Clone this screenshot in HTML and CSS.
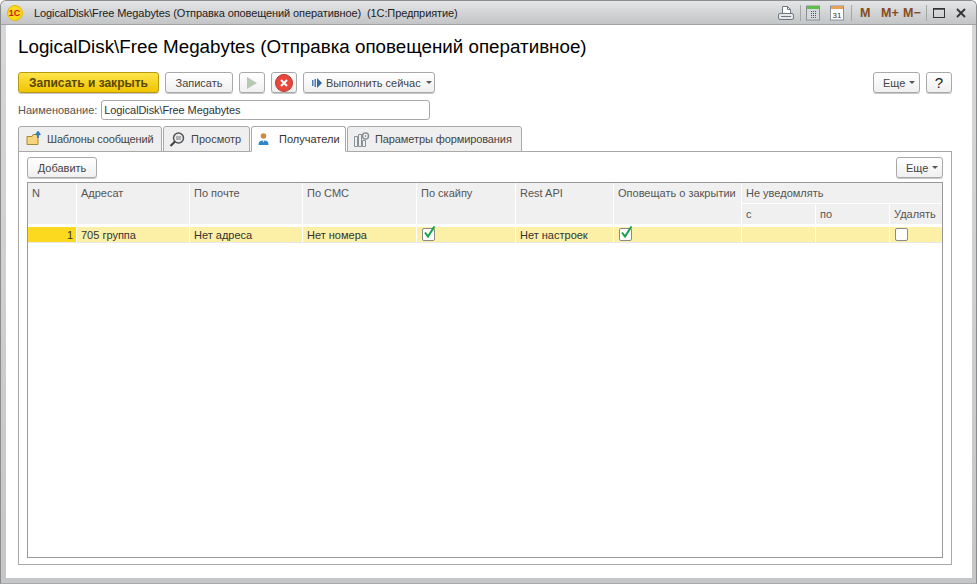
FILE: index.html
```html
<!DOCTYPE html>
<html lang="ru">
<head>
<meta charset="utf-8">
<title>LogicalDisk\Free Megabytes</title>
<link rel="stylesheet" href="styles.css">
</head>
<body>
<div class="window">
  <header class="titlebar">
    <svg class="logo" width="16" height="16" viewBox="0 0 16 16"><circle cx="8" cy="8" r="7.500" fill="#fbd91e" stroke="#e6b800"/><text x="1.800" y="11" class="logo-text">1С</text></svg>
    <span class="wintitle">LogicalDisk\Free Megabytes (Отправка оповещений оперативное)  (1С:Предприятие)</span>
    <div class="winicons">
      <svg class="i-print" width="16" height="16" viewBox="0 0 16 16"><path d="M4.500 1.500h5l3 3v4h-8z" fill="#fff" stroke="#6f7780"/><path d="M9.500 1.500v3h3" fill="none" stroke="#6f7780"/><rect x=".5" y="8.500" width="15" height="6" rx="1.500" fill="#e6e8ea" stroke="#6f7780"/><path d="M3 11.500h10" stroke="#6f7780"/></svg>
      <i class="sep s1"></i>
      <svg class="i-calc" width="14" height="16" viewBox="0 0 14 16"><rect x=".5" y="1" width="13" height="14" fill="#d5d9dc" stroke="#8b9196"/><rect x="1" y="1" width="12" height="3" fill="#5cc04a"/><path d="M5 6h1v1H5zM7 6h1v1H7zM9 6h1v1H9zM5 8h1v1H5zM7 8h1v1H7zM9 8h1v1H9zM5 10h1v1H5zM7 10h1v1H7zM9 10h1v1H9zM5 12h1v1H5zM7 12h1v1H7zM9 12h1v1H9z" fill="#555"/></svg>
      <svg class="i-cal" width="14" height="16" viewBox="0 0 14 16"><rect x=".5" y="1" width="13" height="14" fill="#fff" stroke="#8b9196"/><rect x="1" y="1" width="12" height="3" fill="#e8a05a"/><text x="7" y="13" class="cal-text">31</text></svg>
      <i class="sep s2"></i>
      <span class="mem m1">M</span><span class="mem m2">M+</span><span class="mem m3">M−</span>
      <i class="sep s3"></i>
      <svg class="i-max" width="12" height="12" viewBox="0 0 12 12"><rect x=".5" y="1.500" width="11" height="9" fill="none" stroke="#333"/><path d="M0 2h12" stroke="#333" stroke-width="1.500"/></svg>
      <svg class="i-close" width="10" height="10" viewBox="0 0 10 10"><path d="M1 1l8 8M9 1l-8 8" stroke="#333" stroke-width="1.800"/></svg>
    </div>
  </header>
  <main class="form">
    <h1>LogicalDisk\Free Megabytes (Отправка оповещений оперативное)</h1>
    <div class="toolbar">
      <button class="btn primary">Записать и закрыть</button>
      <button class="btn w-save">Записать</button>
      <button class="btn icon"><svg width="12" height="14" viewBox="0 0 12 14"><path d="M1 1l10 6-10 6z" fill="#b7c8b2"/></svg></button>
      <button class="btn icon"><svg width="20" height="20" viewBox="0 0 20 20"><circle cx="10" cy="10" r="8.500" fill="#e8483c" stroke="#b8362c"/><path d="M7 7l6 6M13 7l-6 6" stroke="#fff" stroke-width="2"/></svg></button>
      <button class="btn run"><svg width="10" height="10" viewBox="0 0 10 10"><path d="M0 2h1.500v6H0zM2.500 1H4v8H2.500z" fill="#4a7fb5"/><path d="M5 0l5 5-5 5z" fill="#2f6aa6"/></svg>Выполнить сейчас<b class="caret"></b></button>
      <span class="spacer"></span>
      <button class="btn more">Еще<b class="caret"></b></button>
      <button class="btn help">?</button>
    </div>
    <div class="field">
      <label>Наименование:</label>
      <input class="input" value="LogicalDisk\Free Megabytes">
    </div>
    <nav class="tabs">
      <div class="tab t1"><svg width="16" height="16" viewBox="0 0 16 16"><path d="M1 5.500h5l1-2h5v10H1z" fill="#f6d57e" stroke="#a68a3c"/><path d="M12 7V2M9.800 4L12 1l2.200 3" fill="none" stroke="#2f7fc0" stroke-width="1.800"/></svg>Шаблоны сообщений</div>
      <div class="tab t2"><svg width="17" height="17" viewBox="0 0 17 17"><circle cx="9.500" cy="7" r="5" fill="#e8ecef" stroke="#555" stroke-width="1.500"/><path d="M6 10.500L1.500 15" stroke="#444" stroke-width="2.200"/><path d="M7 6h5M7 8h5" stroke="#777"/></svg>Просмотр</div>
      <div class="tab t3 active"><svg width="14" height="14" viewBox="0 0 14 14"><circle cx="6.500" cy="4" r="2.800" fill="#c98d45"/><path d="M1.500 13c0-3.500 1.500-4.500 5-4.500s5 1 5 4.500z" fill="#2f86c4"/><path d="M5.500 8.500h2l-1 2z" fill="#fff"/></svg>Получатели</div>
      <div class="tab t4"><svg width="18" height="17" viewBox="0 0 18 17"><path d="M1.500 5.500h3v10h-3zM5.500 3.500h3v12h-3zM9.500 9.500h3v6h-3z" fill="#eef0f2" stroke="#8a8f94"/><circle cx="12.500" cy="5" r="3" fill="#fff" stroke="#8a8f94" stroke-width="1.500"/><circle cx="12.500" cy="5" r="1" fill="#8a8f94"/></svg>Параметры формирования</div>
    </nav>
    <section class="panel">
      <div class="panel-bar">
        <button class="btn add">Добавить</button>
        <button class="btn more">Еще<b class="caret"></b></button>
      </div>
      <div class="table">
        <div class="grid">
          <div class="th span2">N</div>
          <div class="th span2">Адресат</div>
          <div class="th span2">По почте</div>
          <div class="th span2">По СМС</div>
          <div class="th span2">По скайпу</div>
          <div class="th span2">Rest API</div>
          <div class="th span2">Оповещать о закрытии</div>
          <div class="th span3">Не уведомлять</div>
          <div class="th sub">с</div>
          <div class="th sub">по</div>
          <div class="th sub">Удалять</div>
          <div class="td num">1</div>
          <div class="td">705 группа</div>
          <div class="td">Нет адреса</div>
          <div class="td">Нет номера</div>
          <div class="td"><span class="check"><svg width="15" height="14" viewBox="0 0 15 14"><path d="M3 6.500l3 4 6.500-10" fill="none" stroke="#17a04a" stroke-width="2"/></svg></span></div>
          <div class="td">Нет настроек</div>
          <div class="td"><span class="check"><svg width="15" height="14" viewBox="0 0 15 14"><path d="M3 6.500l3 4 6.500-10" fill="none" stroke="#17a04a" stroke-width="2"/></svg></span></div>
          <div class="td"></div>
          <div class="td"></div>
          <div class="td"><span class="check"></span></div>
        </div>
      </div>
    </section>
  </main>
</div>
</body>
</html>
```
FILE: styles.css
```css
* { box-sizing: border-box; }
html, body { margin: 0; height: 100%; background: #fff; }
body { font: 11px "Liberation Sans", Arial, sans-serif; color: #333; overflow: hidden; }
.window {
  height: 584px; display: flex; flex-direction: column;
  background: linear-gradient(#d6d8da, #c4c6c8);
  border: 1px solid #8a8c8e; border-bottom-color: #a8aaac;
  border-radius: 6px 6px 0 0; padding: 0 4px 5px 5px;
}
.titlebar {
  height: 24px; flex: none; display: flex; align-items: center; margin: 0 -4px 0 -5px; padding: 0 10px 0 6px;
  background: linear-gradient(#e4e5e6, #c2c4c6); border-bottom: 1px solid #a0a2a4; border-radius: 5px 5px 0 0;
}
.logo { margin-right: 11px; flex: none; }
.logo-text { font: bold 9px "Liberation Sans", sans-serif; fill: #d01818; }
.wintitle { font-size: 11px; color: #222; white-space: pre; letter-spacing: -.1px; }
.winicons { margin-left: auto; display: flex; align-items: center; }
.sep { width: 1px; height: 16px; background: #a4a6a8; }
.s1 { margin-left: 6px; }
.i-calc { margin-left: 5px; }
.i-cal { margin-left: 10px; }
.s2 { margin-left: 7px; }
.cal-text { font: 8px "Liberation Sans", sans-serif; fill: #333; text-anchor: middle; }
.mem { font-size: 12.500px; font-weight: bold; color: #854c20; flex: none; }
.m1 { margin-left: 8px; width: 21px; }
.m2 { width: 22px; }
.m3 { width: 23px; }
.i-max { margin-left: 6px; }
.i-close { margin-left: 11px; }
.form { flex: 1; background: #fff; padding: 0 20px 13px 12px; display: flex; flex-direction: column; min-height: 0; }
h1 { margin: 0; font-size: 18.800px; font-weight: normal; color: #000; height: 47px; padding-top: 11px; line-height: 22px; white-space: nowrap; }
.toolbar { display: flex; align-items: flex-start; height: 22px; flex: none; }
.btn {
  font: 11px "Liberation Sans", Arial, sans-serif; color: #444; height: 21px; padding: 0; margin: 0;
  background: linear-gradient(#fff, #f0f0f0); border: 1px solid #a9a9a9; border-radius: 3px;
  display: inline-flex; align-items: center; justify-content: center; flex: none; box-shadow: 0 1px 0 #c8c8c8;
}
.primary { width: 141px; font-size: 12px; font-weight: bold; color: #5a4600; background: linear-gradient(#fde44a, #f0c400); border-color: #b89a10; }
.w-save { width: 68px; margin-left: 6px; }
.icon { width: 26px; margin-left: 6px; }
.run { width: 132px; margin-left: 6px; justify-content: flex-start; padding-left: 8px; }
.run svg { margin-right: 4px; }
.caret { width: 0; height: 0; border: 3px solid transparent; border-top: 3px solid #555; border-bottom: 0; margin-left: 5px; }
.spacer { flex: 1; }
.more { width: 47px; justify-content: flex-start; padding-left: 9px; }
.more .caret { margin-left: 4px; }
.help { width: 26px; margin-left: 6px; font-size: 15px; color: #222; }
.field { display: flex; align-items: center; height: 20px; margin-top: 6px; flex: none; gap: 4px; }
.field label { color: #555; }
.input { width: 329px; height: 20px; border: 1px solid #a9a9a9; border-radius: 3px; padding: 0 2px; font: 11px "Liberation Sans", Arial, sans-serif; letter-spacing: -.1px; color: #333; background: #fff; }
.tabs { display: flex; height: 26px; margin-top: 6px; flex: none; gap: 1px; position: relative; z-index: 1; }
.tab { height: 26px; display: flex; align-items: center; gap: 4px; padding-left: 5px; background: #efefef; border: 1px solid #a9a9a9; border-radius: 3px 3px 0 0; color: #444; }
.t1 { width: 144px; padding-left: 7px; gap: 5px; letter-spacing: -.17px; }
.t2 { width: 87px; gap: 5px; }
.t3 { width: 95px; gap: 8px; }
.t4 { width: 175px; letter-spacing: -.1px; }
.active { background: #fff; border-bottom-color: #fff; color: #333; }
.panel { flex: 1; margin-top: -1px; border: 1px solid #a9a9a9; padding: 5px 8px 6px 8px; display: flex; flex-direction: column; min-height: 0; }
.panel-bar { display: flex; justify-content: space-between; height: 25px; flex: none; }
.add { width: 70px; }
.table { flex: 1; border: 1px solid #999; min-height: 0; }
.grid {
  display: grid; gap: 1px; background: #fff;
  grid-template-columns: 48px 112px 112px 113px 98px 97px 127px 73px 73px 52px;
  grid-template-rows: 20px 20px 17px;
  border-bottom: 1px solid #e8e8e8;
}
.th { background: #f0f0f0; color: #555; padding: 4px 4px; white-space: nowrap; }
.span2 { grid-row: span 2; }
.span3 { grid-column: span 3; }
.td { background: #fcefa6; color: #333; padding: 2px 3px 0 4px; white-space: nowrap; margin-top: 2px; }
.num { background: #fcd91f; text-align: right; }
.check { display: block; width: 13px; height: 13px; border: 1px solid #8a8a8a; border-radius: 2px; background: #fff; margin: -1px 0 0 1px; position: relative; }
.check svg { position: absolute; left: -1px; top: -3px; }
```
